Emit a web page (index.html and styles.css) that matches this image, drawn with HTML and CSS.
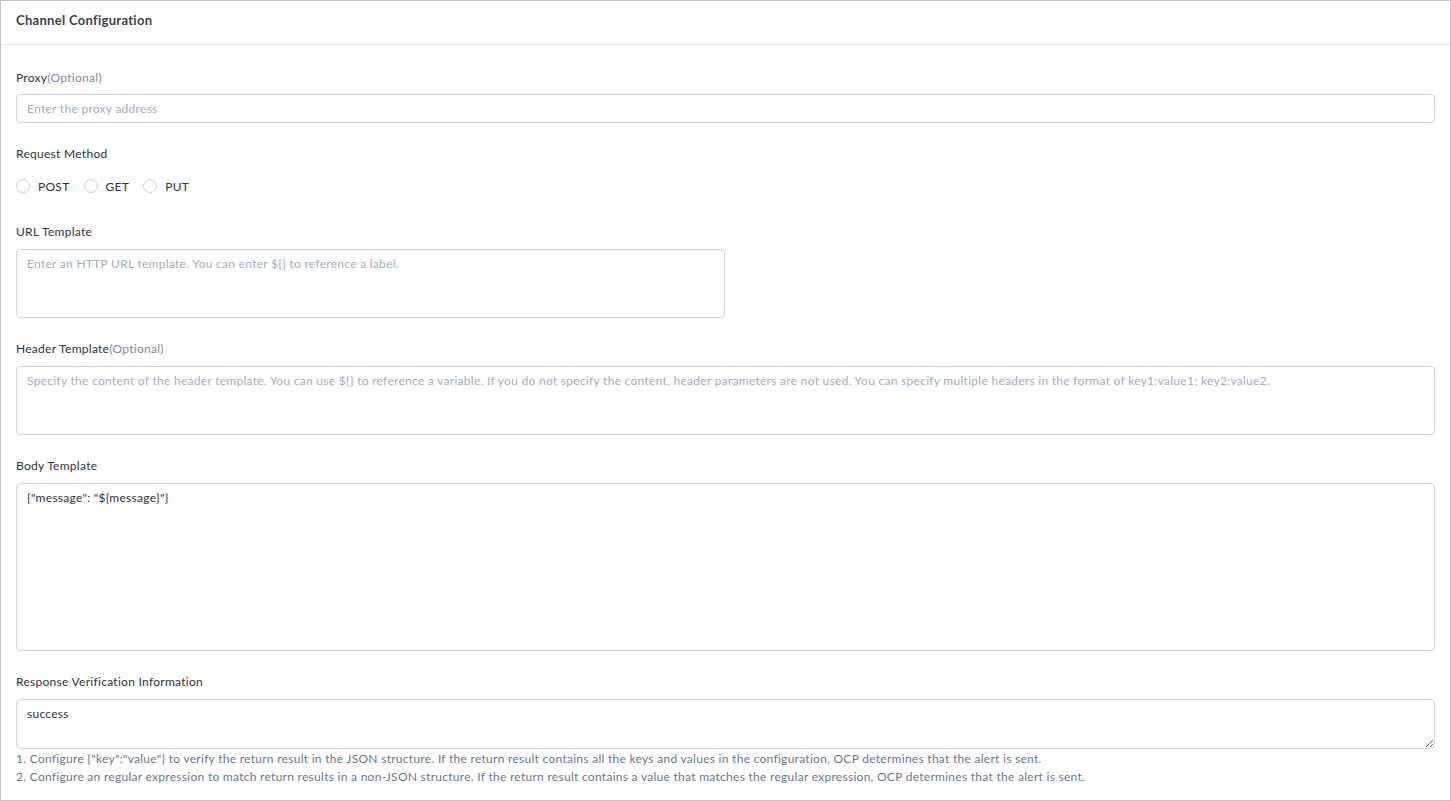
FILE: index.html
```html
<!DOCTYPE html>
<html lang="en">
<head>
  <meta charset="UTF-8">
  <meta name="viewport" content="width=device-width, initial-scale=1.0">
  <title>Channel Configuration</title>
  <link rel="stylesheet" href="styles.css">
</head>
<body>
  <div class="card">
    <div class="card-header">Channel Configuration</div>
    <div class="card-body">
      <div class="field">
        <label class="field-label" for="proxy">Proxy<span class="optional">(Optional)</span></label>
        <input type="text" id="proxy" class="text-input" placeholder="Enter the proxy address">
      </div>

      <div class="field">
        <div class="field-label">Request Method</div>
        <div class="radio-group">
          <label class="radio"><input type="radio" name="method"><span class="radio-dot"></span>POST</label>
          <label class="radio"><input type="radio" name="method"><span class="radio-dot"></span>GET</label>
          <label class="radio"><input type="radio" name="method"><span class="radio-dot"></span>PUT</label>
        </div>
      </div>

      <div class="field">
        <label class="field-label" for="url-template">URL Template</label>
        <textarea id="url-template" class="text-area url-area" placeholder="Enter an HTTP URL template. You can enter ${} to reference a label."></textarea>
      </div>

      <div class="field">
        <label class="field-label" for="header-template">Header Template<span class="optional">(Optional)</span></label>
        <textarea id="header-template" class="text-area header-area" placeholder="Specify the content of the header template. You can use ${} to reference a variable. If you do not specify the content, header parameters are not used. You can specify multiple headers in the format of key1:value1; key2:value2."></textarea>
      </div>

      <div class="field">
        <label class="field-label" for="body-template">Body Template</label>
        <textarea id="body-template" class="text-area body-area">{"message": "${message}"}</textarea>
      </div>

      <div class="field last">
        <label class="field-label" for="response-info">Response Verification Information</label>
        <textarea id="response-info" class="text-area response-area resizable">success</textarea>
        <div class="help-text">
          <div>1. Configure {"key":"value"} to verify the return result in the JSON structure. If the return result contains all the keys and values in the configuration, OCP determines that the alert is sent.</div>
          <div>2. Configure an regular expression to match return results in a non-JSON structure. If the return result contains a value that matches the regular expression, OCP determines that the alert is sent.</div>
        </div>
      </div>
    </div>
  </div>
</body>
</html>
```

FILE: styles.css
```css
* {
  box-sizing: border-box;
}

body {
  margin: 0;
  font-family: Lato, "Noto Sans", sans-serif;
  font-size: 12px;
  letter-spacing: 0.28px;
  color: #2f3440;
  background: #fff;
}

.card {
  width: 1451px;
  height: 801px;
  border: 1px solid #c4c4c4;
  background: #fff;
}

.card-header {
  height: 44px;
  padding: 0 15px 5px 15px;
  display: flex;
  align-items: center;
  font-size: 13px;
  font-weight: 700;
  letter-spacing: 0.3px;
  color: #3a3f4a;
  border-bottom: 1px solid #e1e6f0;
}

.card-body {
  padding: 24px 15px 0 15px;
}

.field {
  margin-bottom: 22px;
}

.field.last {
  margin-bottom: 0;
}

.field-label {
  display: block;
  line-height: 18px;
  margin-bottom: 8px;
  color: #2f3440;
}

.field:first-child .field-label {
  margin-bottom: 7px;
}

.optional {
  color: #7d89a4;
}

.text-input,
.text-area {
  display: block;
  width: 100%;
  font-family: inherit;
  font-size: 12px;
  letter-spacing: 0.28px;
  color: #2f3440;
  border: 1px solid #cdd4e2;
  border-radius: 4px;
  outline: none;
  background: #fff;
}

.text-input {
  height: 29px;
  padding: 0 10px;
}

.text-area {
  padding: 5px 10px;
  line-height: 18px;
  resize: none;
}

.text-input::placeholder,
.text-area::placeholder {
  color: #a4aec4;
}

.url-area {
  width: 709px;
  height: 69px;
}

.header-area {
  height: 69px;
}

.body-area {
  height: 168px;
}

.response-area {
  height: 50px;
}

.resizable {
  resize: vertical;
}

.radio-group {
  display: flex;
  align-items: center;
  height: 30px;
  gap: 14px;
}

.radio {
  display: flex;
  align-items: center;
  color: #2f3440;
  cursor: pointer;
}

.radio input {
  display: none;
}

.radio-dot {
  width: 14px;
  height: 14px;
  border: 1px solid #c9d0de;
  border-radius: 50%;
  margin-right: 8px;
  background: #fff;
}

.help-text {
  color: #6b7893;
  line-height: 18px;
  padding-top: 1px;
}
```
